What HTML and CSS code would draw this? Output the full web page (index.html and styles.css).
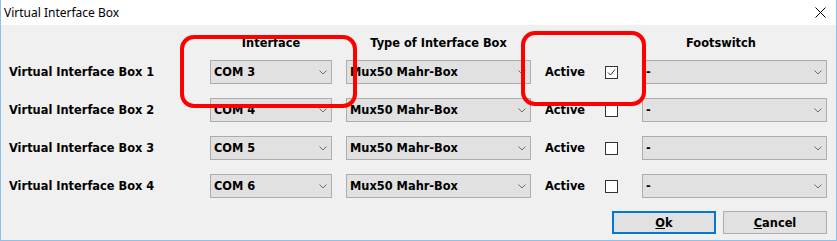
FILE: index.html
```html
<!DOCTYPE html>
<html>
<head>
<meta charset="utf-8">
<link rel="stylesheet" href="styles.css">
</head>
<body>
<div class="window">
  <div class="titlebar">
    <span class="title">Virtual Interface Box</span>
    <svg class="close" width="11" height="11" viewBox="0 0 11 11"><path d="M0.5 0.5 L10.5 10.5 M10.5 0.5 L0.5 10.5" stroke="#000" stroke-width="1" fill="none"/></svg>
  </div>
  <div class="content">
    <div class="grid">
      <div></div>
      <div class="hdr center">Interface</div>
      <div class="hdr center">Type of Interface Box</div>
      <div></div>
      <div></div>
      <div class="hdr fs">Footswitch</div>

      <div class="label">Virtual Interface Box 1</div>
      <div class="combo iface"><span>COM 3</span><svg class="chev" width="8" height="5" viewBox="0 0 8 5"><path d="M0.5 0.5 L4 4 L7.5 0.5" stroke="#6d6d6d" fill="none"/></svg></div>
      <div class="combo type"><span>Mux50 Mahr-Box</span><svg class="chev" width="8" height="5" viewBox="0 0 8 5"><path d="M0.5 0.5 L4 4 L7.5 0.5" stroke="#6d6d6d" fill="none"/></svg></div>
      <div class="label">Active</div>
      <div class="check"><svg width="13" height="13" viewBox="0 0 13 13"><rect x="0.5" y="0.5" width="12" height="12" fill="#fff" stroke="#333"/><path d="M3 6.5 L5.5 9 L10 3.5" stroke="#333" fill="none"/></svg></div>
      <div class="combo foot"><span>-</span><svg class="chev" width="8" height="5" viewBox="0 0 8 5"><path d="M0.5 0.5 L4 4 L7.5 0.5" stroke="#6d6d6d" fill="none"/></svg></div>

      <div class="label">Virtual Interface Box 2</div>
      <div class="combo iface"><span>COM 4</span><svg class="chev" width="8" height="5" viewBox="0 0 8 5"><path d="M0.5 0.5 L4 4 L7.5 0.5" stroke="#6d6d6d" fill="none"/></svg></div>
      <div class="combo type"><span>Mux50 Mahr-Box</span><svg class="chev" width="8" height="5" viewBox="0 0 8 5"><path d="M0.5 0.5 L4 4 L7.5 0.5" stroke="#6d6d6d" fill="none"/></svg></div>
      <div class="label">Active</div>
      <div class="check"><svg width="13" height="13" viewBox="0 0 13 13"><rect x="0.5" y="0.5" width="12" height="12" fill="#fff" stroke="#333"/></svg></div>
      <div class="combo foot"><span>-</span><svg class="chev" width="8" height="5" viewBox="0 0 8 5"><path d="M0.5 0.5 L4 4 L7.5 0.5" stroke="#6d6d6d" fill="none"/></svg></div>

      <div class="label">Virtual Interface Box 3</div>
      <div class="combo iface"><span>COM 5</span><svg class="chev" width="8" height="5" viewBox="0 0 8 5"><path d="M0.5 0.5 L4 4 L7.5 0.5" stroke="#6d6d6d" fill="none"/></svg></div>
      <div class="combo type"><span>Mux50 Mahr-Box</span><svg class="chev" width="8" height="5" viewBox="0 0 8 5"><path d="M0.5 0.5 L4 4 L7.5 0.5" stroke="#6d6d6d" fill="none"/></svg></div>
      <div class="label">Active</div>
      <div class="check"><svg width="13" height="13" viewBox="0 0 13 13"><rect x="0.5" y="0.5" width="12" height="12" fill="#fff" stroke="#333"/></svg></div>
      <div class="combo foot"><span>-</span><svg class="chev" width="8" height="5" viewBox="0 0 8 5"><path d="M0.5 0.5 L4 4 L7.5 0.5" stroke="#6d6d6d" fill="none"/></svg></div>

      <div class="label">Virtual Interface Box 4</div>
      <div class="combo iface"><span>COM 6</span><svg class="chev" width="8" height="5" viewBox="0 0 8 5"><path d="M0.5 0.5 L4 4 L7.5 0.5" stroke="#6d6d6d" fill="none"/></svg></div>
      <div class="combo type"><span>Mux50 Mahr-Box</span><svg class="chev" width="8" height="5" viewBox="0 0 8 5"><path d="M0.5 0.5 L4 4 L7.5 0.5" stroke="#6d6d6d" fill="none"/></svg></div>
      <div class="label">Active</div>
      <div class="check"><svg width="13" height="13" viewBox="0 0 13 13"><rect x="0.5" y="0.5" width="12" height="12" fill="#fff" stroke="#333"/></svg></div>
      <div class="combo foot"><span>-</span><svg class="chev" width="8" height="5" viewBox="0 0 8 5"><path d="M0.5 0.5 L4 4 L7.5 0.5" stroke="#6d6d6d" fill="none"/></svg></div>
    </div>
    <div class="buttons">
      <div class="btn default"><span class="ul">O</span>k</div>
      <div class="btn"><span class="ul">C</span>ancel</div>
    </div>
  </div>
  <div class="mark mark1"></div>
  <div class="mark mark2"></div>
</div>
</body>
</html>
```

FILE: styles.css
```css
html, body {
  margin: 0;
  padding: 0;
  background: #f0f0f0;
}
.window {
  position: relative;
  width: 837px;
  height: 241px;
  box-sizing: border-box;
  border: 1px solid #8cc1ec;
  border-top: none;
  background: #f0f0f0;
  overflow: hidden;
}
.titlebar {
  height: 25px;
  background: #fff;
  display: flex;
  align-items: center;
  justify-content: space-between;
  padding: 0 10px 0 3px;
}
.title {
  font-family: "Segoe UI", "Noto Sans", sans-serif;
  font-size: 12px;
  color: #000;
}
.close {
  display: block;
}
.content {
  padding: 0 9px 0 8px;
  font-family: "DejaVu Sans", sans-serif;
  font-weight: bold;
  font-size: 11.4px;
  color: #000;
}
.grid {
  display: grid;
  grid-template-columns: 201px 136px 199px 60px 37px 185px;
  grid-template-rows: 21px repeat(4, 24px);
  row-gap: 14px;
  align-items: center;
}
.hdr {
  align-self: end;
  line-height: 16px;
  margin-bottom: -5px;
}
.hdr.center {
  text-align: center;
}
.grid > .hdr.center:nth-child(2) { width: 122px; }
.grid > .hdr.center:nth-child(3) { width: 185px; }
.hdr.fs {
  padding-left: 44px;
}
.label {
  line-height: 16px;
}
.combo {
  box-sizing: border-box;
  height: 24px;
  border: 1px solid #adadad;
  background: #e1e1e1;
  display: flex;
  align-items: center;
  justify-content: space-between;
  padding: 0 4px 0 3px;
}
.combo.iface { width: 122px; }
.combo.type { width: 185px; }
.combo.foot { width: 185px; }
.chev { display: block; }
.check svg { display: block; }
.buttons {
  display: flex;
  justify-content: flex-end;
  gap: 7px;
  margin-top: 13px;
}
.btn {
  box-sizing: border-box;
  width: 104px;
  height: 23px;
  border: 1px solid #adadad;
  background: #e1e1e1;
  display: flex;
  align-items: center;
  justify-content: center;
  line-height: 16px;
}
.btn.default {
  border: 2px solid #0078d7;
}
.ul {
  text-decoration: underline;
}
.mark {
  position: absolute;
  box-sizing: border-box;
  border: 4px solid #ff0000;
  border-radius: 14px;
}
.mark1 {
  left: 179px;
  top: 35px;
  width: 177px;
  height: 73px;
}
.mark2 {
  left: 520px;
  top: 31px;
  width: 125px;
  height: 75px;
}
```
